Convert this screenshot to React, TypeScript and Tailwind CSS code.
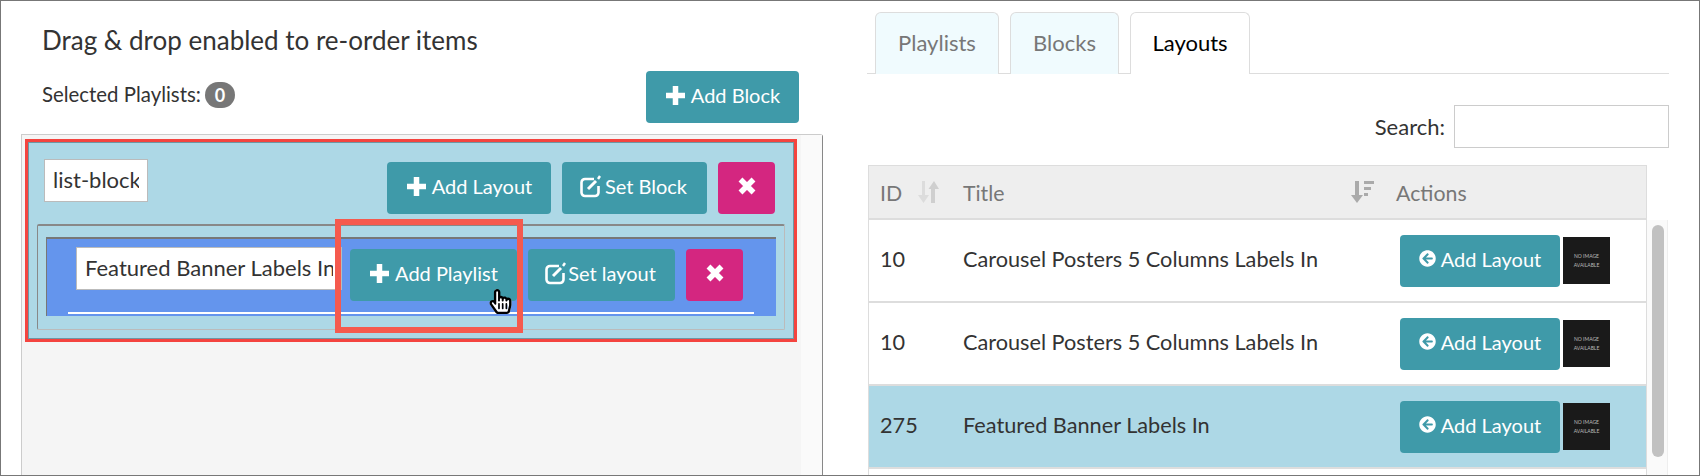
import React, { ReactNode } from 'react';
import { FaArrowCircleLeft, FaHandPointer, FaRegHandPointer } from 'react-icons/fa';

const rows = [
  { id: '10', title: 'Carousel Posters 5 Columns Labels In', active: false },
  { id: '10', title: 'Carousel Posters 5 Columns Labels In', active: false },
  { id: '275', title: 'Featured Banner Labels In', active: true },
];

const TealButton = ({ className, children }: { className: string; children: ReactNode }) => (
  <button className={`flex h-[52px] shrink-0 items-center justify-center rounded-[4px] bg-[#3f9aa9] pb-[4px] text-[20px] text-white ${className}`}>
    {children}
  </button>
);

const PlusIcon = () => (
  <svg width="21" height="21" viewBox="0 0 21 21" fill="none" stroke="currentColor" strokeWidth="5.500">
    <path d="M10.500 1v19M1 10.500h19" />
  </svg>
);

const EditIcon = () => (
  <svg width="23" height="24" viewBox="0 0 23 24" fill="none" stroke="currentColor" strokeWidth="2.600">
    <path d="M15 5H6a3.500 3.500 0 0 0-3.500 3.500v10A3.500 3.500 0 0 0 6 22h10a3.500 3.500 0 0 0 3.500-3.500V12" />
    <path d="M9 15l8-8" strokeWidth="3" />
    <path d="M19 5l2-3" strokeWidth="2.400" />
  </svg>
);

const CloseButton = () => (
  <button className="flex h-[52px] w-[57px] shrink-0 items-center justify-center rounded-[4px] bg-[#d42680] text-white">
    <svg width="18" height="18" viewBox="0 0 18 18" fill="none" stroke="currentColor" strokeWidth="5.500" className="mb-[5px]">
      <path d="M2.500 2.500l13 13M15.500 2.500l-13 13" />
    </svg>
  </button>
);

const SortBoth = () => (
  <svg width="21" height="24" viewBox="0 0 21 24">
    <path d="M4 1h3v14h4l-5.500 8L0 15h4z" fill="#dcdcdc" />
    <path d="M13 23h4V9h4l-5-8-5.500 8H13z" fill="#cfcfcf" />
  </svg>
);

const SortAmount = () => (
  <svg width="24" height="24" viewBox="0 0 24 24" fill="#aaa">
    <path d="M4 1h4v14h4l-6 8-6-8h4z" />
    <path d="M13 1h10v3H13zM13 7h7v3h-7zM13 13h4v3h-4z" />
  </svg>
);

export default function App() {
  return (
    <div className="relative flex h-[476px] w-[1700px] overflow-hidden border border-[#777] bg-white font-['Lato','Liberation_Sans',sans-serif] text-[#333]">
      {/* Left column */}
      <section className="flex w-[866px] shrink-0 flex-col">
        <h2 className="ml-[41px] mt-[22px] shrink-0 text-[26px] leading-[34px]">Drag &amp; drop enabled to re-order items</h2>
        <div className="ml-[41px] mt-[14px] flex h-[53px] w-[757px] shrink-0 justify-between">
          <div className="flex items-start gap-[4px] pt-[11px] text-[20.400px] leading-[25px]">
            Selected Playlists:
            <span className="flex h-[26px] w-[30px] items-center justify-center rounded-full bg-[#777] text-[18px] font-bold text-white">0</span>
          </div>
          <TealButton className="w-[153px] gap-[5px]"><PlusIcon />Add Block</TealButton>
        </div>

        <div className="ml-[20px] mt-[10px] flex h-[342px] w-[802px] shrink-0 rounded-tr-[3px] border-x border-t border-x-[#ccc] border-t-[#ccc] border-r-[#888]">
          <div className="w-[779px] bg-[#f5f5f5] pl-[3px] pt-[4px]">
            {/* Highlighted block */}
            <div className="h-[203px] w-[772px] border-[3px] border-[#f4443f]">
              <div className="h-full border border-[#6e96a3] bg-[#add8e6]">
                <div className="flex items-start justify-between pl-[15px] pr-[18px] pt-[16px]">
                  <input readOnly value="list-block" className="h-[43px] w-[104px] border border-[#bbb] bg-white px-[8px] pb-[2px] text-[22px] text-[#333]" />
                  <div className="mt-[3px] flex gap-[11px]">
                    <TealButton className="w-[164px] gap-[5px]"><PlusIcon />Add Layout</TealButton>
                    <TealButton className="w-[145px] gap-[3px] pr-[3px]"><EditIcon />Set Block</TealButton>
                    <CloseButton />
                  </div>
                </div>
                <div className="mx-[8px] mt-[10px] h-[106px] rounded-[2px] border border-[#bbb] border-l-[#888] border-t-2 border-t-[#888] px-[8px] pt-[11px]">
                  <div className="h-[79px] border-l border-t-2 border-l-[#777] border-t-[#777] bg-[#6495ed] pt-[8px]">
                    <div className="ml-[29px] flex items-start">
                      <input readOnly value="Featured Banner Labels In" className="h-[43px] w-[266px] border border-[#bbb] bg-white px-[8px] pb-[2px] text-[22px] text-[#333]" />
                      <div className="ml-[8px] mt-[2px] flex gap-[11px]">
                        <TealButton className="w-[167px] gap-[5px]"><PlusIcon />Add Playlist</TealButton>
                        <TealButton className="w-[147px] gap-[1px] pr-[3px]"><EditIcon />Set layout</TealButton>
                        <CloseButton />
                      </div>
                    </div>
                    <div className="ml-[21px] mt-[11px] h-[2px] w-[686px] bg-white" />
                  </div>
                </div>
              </div>
            </div>
          </div>
          <div className="flex-1 bg-[#fafafa]" />
        </div>
      </section>

      {/* Right column */}
      <section className="flex w-[802px] shrink-0 flex-col">
        <div className="mt-[11px] flex h-[62px] shrink-0 gap-[11px] border-b border-[#ddd] pl-[8px]">
          <div className="flex h-[62px] w-[124px] items-center justify-center rounded-t-[6px] border border-b-0 border-[#ddd] bg-[#f0fbfe] pb-[3px] text-[22px] text-[#777]">Playlists</div>
          <div className="flex h-[62px] w-[109px] items-center justify-center rounded-t-[6px] border border-b-0 border-[#ddd] bg-[#f0fbfe] pb-[3px] text-[22px] text-[#777]">Blocks</div>
          <div className="flex h-[62px] w-[120px] items-center justify-center rounded-t-[6px] border border-b-0 border-[#ddd] bg-white pb-[3px] text-[22px] text-black">Layouts</div>
        </div>

        <div className="mt-[31px] flex shrink-0 items-center justify-end gap-[9px] text-[22px]">
          Search:
          <input readOnly className="h-[43px] w-[215px] border border-[#ccc] bg-white" />
        </div>

        <div className="ml-[1px] mt-[17px] flex h-[55px] w-[779px] shrink-0 items-center border border-b-2 border-[#ddd] bg-[#eee] pl-[11px] text-[21.300px] text-[#777]">
          <span className="w-[38px] pt-[4px]">ID</span>
          <SortBoth />
          <span className="ml-[24px] w-[388px] pt-[4px]">Title</span>
          <SortAmount />
          <span className="ml-[21px] pt-[4px]">Actions</span>
        </div>

        <div className="flex">
          <div className="ml-[1px] w-[779px] border-x border-[#ddd]">
            {rows.map((row, i) => (
              <div key={i} className={`flex h-[83px] items-center border-b-2 border-[#ddd] pl-[11px] text-[21.700px] ${row.active ? 'bg-[#add8e6]' : 'bg-white'}`}>
                <span className="w-[83px] pb-[2px]">{row.id}</span>
                <span className="w-[437px] pb-[2px]">{row.title}</span>
                <TealButton className="w-[160px] gap-[5px]"><FaArrowCircleLeft className="text-[17px]" />Add Layout</TealButton>
                <div className="ml-[3px] flex h-[47px] w-[47px] flex-col items-center justify-center bg-[#1a1a1a] text-[5px] leading-[9px] text-[#bbb]">
                  <span>NO IMAGE</span>
                  <span>AVAILABLE</span>
                </div>
              </div>
            ))}
          </div>
          <div className="h-[260px] w-[21px] border-r border-[#eee] bg-[#fafafa] px-[5px] pt-[5px]">
            <div className="h-[232px] w-[12px] rounded-full bg-[#c1c1c1]" />
          </div>
        </div>
      </section>

      {/* Annotation over the page */}
      <div className="absolute left-[334px] top-[218px] h-[114px] w-[188px] border-[6px] border-[#f55a4e]" />
      <div className="absolute left-[487px] top-[288px] text-[25px]">
        <FaHandPointer className="absolute text-white" />
        <FaRegHandPointer className="absolute text-black" />
      </div>
    </div>
  );
}
